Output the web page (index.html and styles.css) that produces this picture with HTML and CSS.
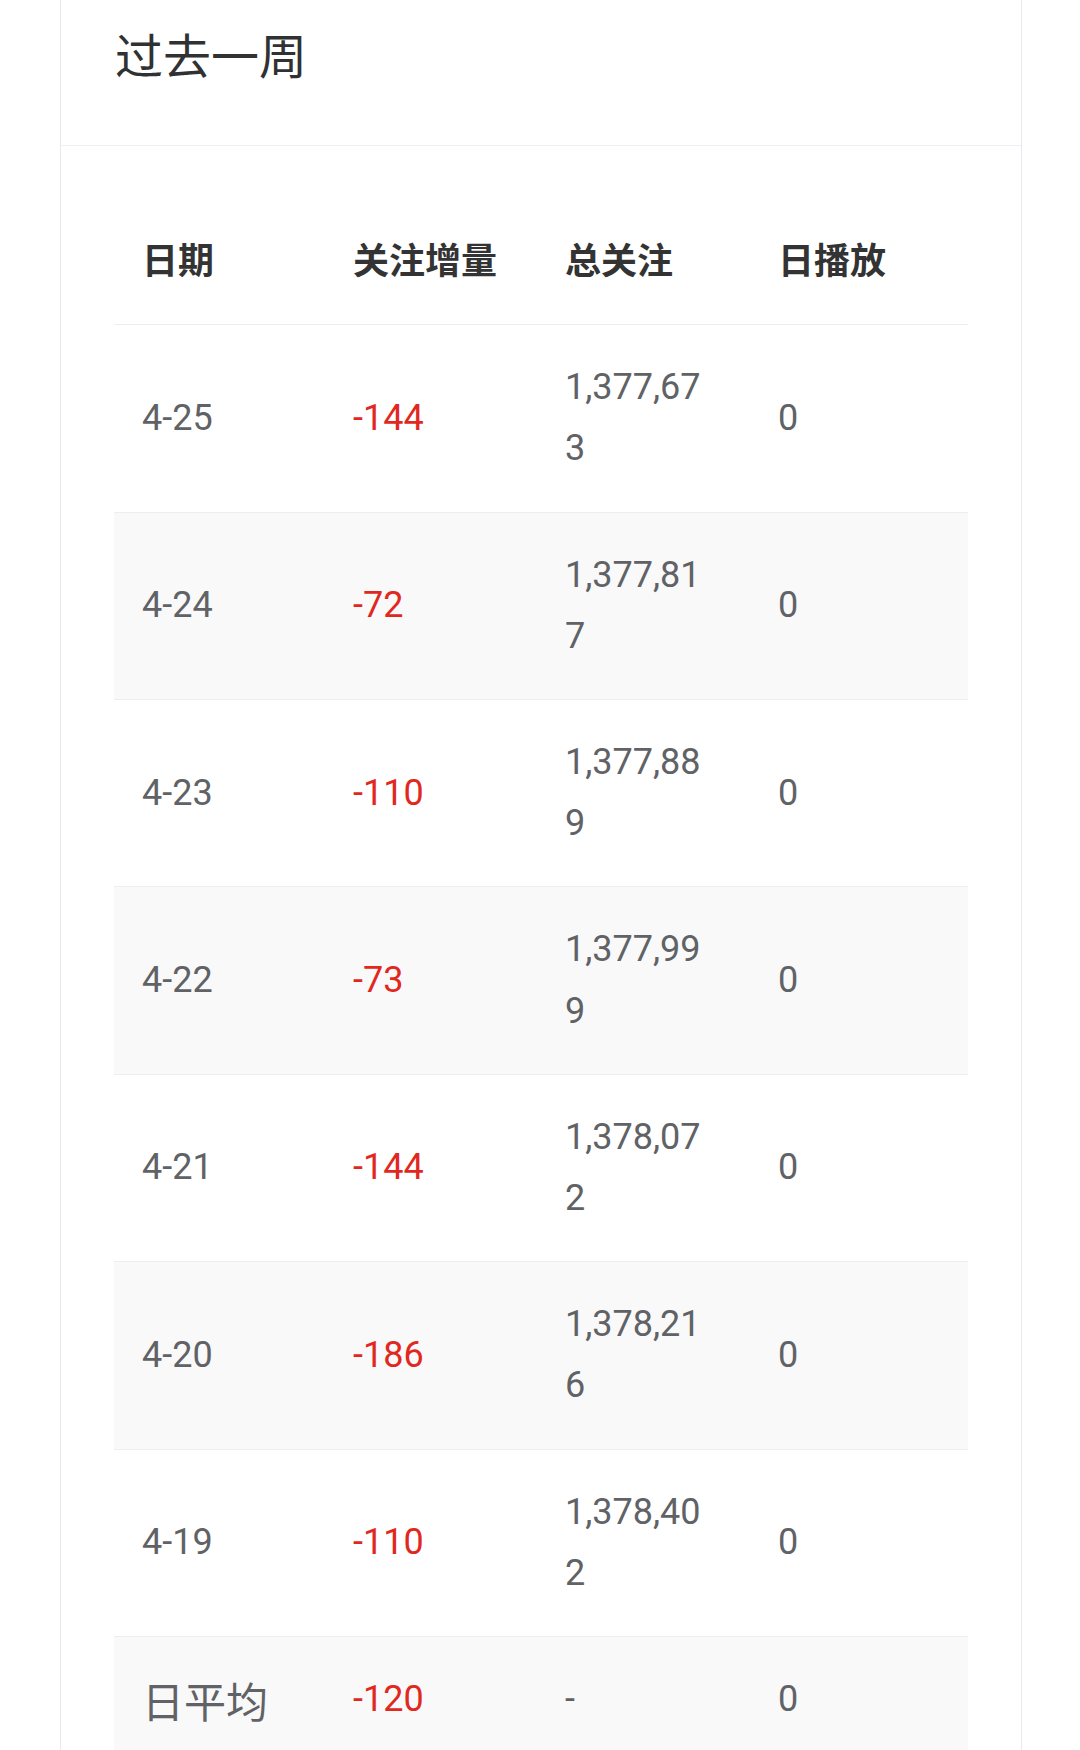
FILE: index.html
```
<!DOCTYPE html>
<html lang="zh-CN">
<head>
<meta charset="utf-8">
<title>过去一周</title>
<link rel="stylesheet" href="styles.css">
</head>
<body>
<div class="card">
  <div class="card-header">过去一周</div>
  <div class="card-body">
    <table class="stats">
      <colgroup>
        <col class="c1"><col class="c2"><col class="c3"><col class="c4">
      </colgroup>
      <thead>
        <tr><th>日期</th><th>关注增量</th><th>总关注</th><th>日播放</th></tr>
      </thead>
      <tbody>
        <tr><td>4-25</td><td class="neg">-144</td><td>1,377,673</td><td>0</td></tr>
        <tr><td>4-24</td><td class="neg">-72</td><td>1,377,817</td><td>0</td></tr>
        <tr><td>4-23</td><td class="neg">-110</td><td>1,377,889</td><td>0</td></tr>
        <tr><td>4-22</td><td class="neg">-73</td><td>1,377,999</td><td>0</td></tr>
        <tr><td>4-21</td><td class="neg">-144</td><td>1,378,072</td><td>0</td></tr>
        <tr><td>4-20</td><td class="neg">-186</td><td>1,378,216</td><td>0</td></tr>
        <tr><td>4-19</td><td class="neg">-110</td><td>1,378,402</td><td>0</td></tr>
        <tr><td class="avg">日平均</td><td class="neg">-120</td><td>-</td><td>0</td></tr>
      </tbody>
    </table>
  </div>
</div>
</body>
</html>
```
FILE: styles.css
```
html, body {
  margin: 0;
  padding: 0;
  background: #ffffff;
}

body {
  font-family: Roboto, "Noto Sans CJK SC", sans-serif;
  color: #606266;
}

.card {
  box-sizing: border-box;
  width: 962px;
  margin-left: 60px;
  background: #ffffff;
  border: 1px solid #e7e9f0;
  border-top: none;
  min-height: 1750px;
}

.card-header {
  font-family: "Noto Sans CJK SC", sans-serif;
  font-size: 48px;
  line-height: 72px;
  color: #303133;
  padding: 17px 54px 56px;
  border-bottom: 1px solid #eef0f4;
}

.card-body {
  padding: 52px 53px 53px;
}

.stats {
  width: 854px;
  table-layout: fixed;
  border-collapse: collapse;
  border-spacing: 0;
}

.c1 { width: 211px; }
.c2 { width: 212px; }
.c3 { width: 213px; }
.c4 { width: 218px; }

.stats th,
.stats td {
  padding: 32px 30px 32px 28px;
  line-height: 61.2px;
  font-size: 36px;
  text-align: left;
  vertical-align: middle;
  word-break: break-all;
  border-bottom: 1px solid #eceef3;
}

.stats th {
  font-family: "Noto Sans CJK SC", sans-serif;
  font-weight: 700;
  color: #333333;
  padding-top: 30px;
  padding-bottom: 35px;
}

.stats tbody tr:nth-child(even) td {
  background: #f9f9fa;
}

.stats td.neg {
  color: #e1281f;
}

.stats td.avg {
  font-family: "Noto Sans CJK SC", sans-serif;
  font-size: 42px;
}
```
